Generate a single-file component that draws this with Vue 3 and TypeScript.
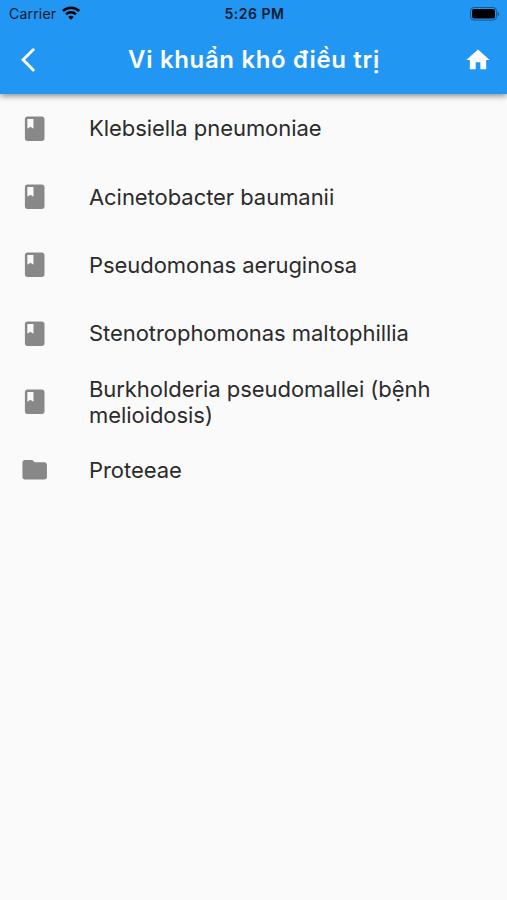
<script setup lang="ts">
interface Item { name: string; kind: 'book' | 'folder' }
const items: Item[] = [
  { name: 'Klebsiella pneumoniae', kind: 'book' },
  { name: 'Acinetobacter baumanii', kind: 'book' },
  { name: 'Pseudomonas aeruginosa', kind: 'book' },
  { name: 'Stenotrophomonas maltophillia', kind: 'book' },
  { name: 'Burkholderia pseudomallei (bệnh melioidosis)', kind: 'book' },
  { name: 'Proteeae', kind: 'folder' },
]
const icons: Record<Item['kind'], string> = {
  book: 'M18 2H6c-1.1 0-2 .9-2 2v16c0 1.1.9 2 2 2h12c1.1 0 2-.9 2-2V4c0-1.1-.9-2-2-2zM6 4h5v8l-2.5-1.5L6 12V4z',
  folder: 'M10 4H4c-1.1 0-1.99.9-1.99 2L2 18c0 1.1.9 2 2 2h16c1.1 0 2-.9 2-2V8c0-1.1-.9-2-2-2h-8l-2-2z',
}
</script>

<template>
  <div class="screen">
    <header class="top">
      <div class="status">
        <div class="carrier">
          <span>Carrier</span>
          <svg class="wifi" viewBox="0 0 18 14"><path d="M9 13.800 11.700 11a3.900 3.900 0 0 0-5.400 0zM3.200 7.400 4.900 9.200a6 6 0 0 1 8.200 0L14.800 7.400a8.400 8.400 0 0 0-11.600 0zM0 4l1.800 1.900a10.400 10.400 0 0 1 14.400 0L18 4a13 13 0 0 0-18 0z" /></svg>
        </div>
        <span class="time">5:26 PM</span>
        <svg class="battery" viewBox="0 0 30 14"><rect x=".5" y=".5" width="26" height="12.600" rx="3.500" fill="none" stroke="#000" stroke-opacity=".4" /><rect x="2" y="2" width="23" height="9.600" rx="2" /><path d="M27.700 4.700v4.400c2-.8 2-3.600 0-4.400z" opacity=".45" /></svg>
      </div>
      <div class="bar">
        <svg class="back" viewBox="0 0 14 24"><path d="M12.200 1.700 2.100 11.700l10.100 10.200" /></svg>
        <h1>Vi khuẩn khó điều trị</h1>
        <svg class="home" viewBox="0 0 24 24"><path d="M10 20v-6h4v6h5v-8h3L12 3 2 12h3v8z" /></svg>
      </div>
    </header>
    <ul class="list">
      <li v-for="item in items" :key="item.name">
        <svg class="icon" viewBox="0 0 24 24"><path :d="icons[item.kind]" /></svg>
        <span class="label">{{ item.name }}</span>
      </li>
    </ul>
  </div>
</template>

<style>
body { background: #fafafa; }
</style>
<style scoped>
.screen { min-height: 900px; background: #fafafa; font-family: Inter, "Liberation Sans", sans-serif; }
.top { height: 94px; background: #2196f3; box-shadow: 0 2px 6px rgba(0, 0, 0, .45); }
.status { height: 27px; display: grid; grid-template-columns: 1fr auto 1fr; align-items: center; padding: 0 7px 0 9px; font-size: 14px; color: #07192b; }
.carrier { display: flex; align-items: center; gap: 6px; letter-spacing: .2px; }
.wifi { width: 18px; height: 14px; fill: #000; margin-top: -2px; }
.time { font-weight: 600; letter-spacing: .5px; }
.battery { width: 30px; height: 14px; justify-self: end; }
.bar { height: 65px; display: grid; grid-template-columns: 60px 1fr 60px; align-items: center; }
.back { width: 14px; height: 24px; margin-left: 21px; fill: none; stroke: #fff; stroke-width: 2.9; stroke-linecap: round; stroke-linejoin: miter; }
.home { width: 28px; height: 28px; margin-left: 17px; fill: #fff; }
h1 { margin: 0; padding-left: 1px; text-align: center; color: #fff; font-size: 24px; font-weight: 600; letter-spacing: .66px; white-space: nowrap; }
.list { list-style: none; margin: 0; padding: 0; }
li { height: 68.4px; display: flex; align-items: center; padding: 0 40px 0 20.4px; }
.icon { width: 29.4px; height: 29.4px; margin-right: 39.2px; fill: #888; flex: none; }
.label { font-size: 22px; line-height: 26px; letter-spacing: -.05px; color: #2b2b2b; }
</style>
